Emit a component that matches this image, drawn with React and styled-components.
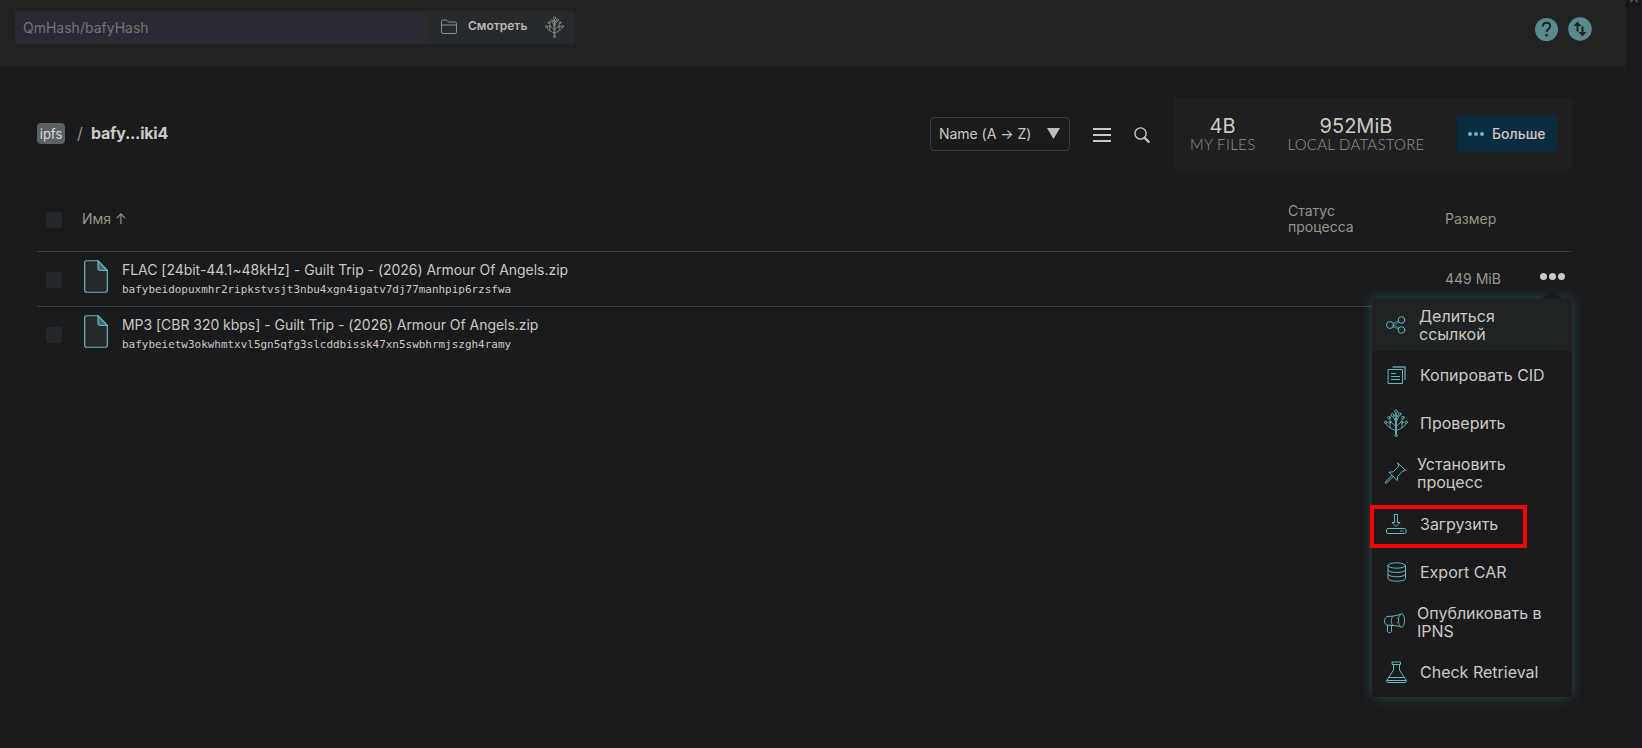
import React from "react";
import styled, { createGlobalStyle } from "styled-components";

const colors = {
  page: "#191b1c",
  bar: "#202223",
  panel: "#1e2021",
  field: "#24282a",
  line: "#3a3d3f",
  text: "#cdc9c2",
  muted: "#9d9488",
  aqua: "#69b5bb",
  teal: "#5b8a8d",
};

const GlobalStyle = createGlobalStyle`
  * {
    box-sizing: border-box;
  }
  body {
    margin: 0;
    background: ${colors.page};
    color: ${colors.text};
    font-family: Inter, "Liberation Sans", sans-serif;
    font-size: 14px;
    overflow: hidden;
  }
`;

const Page = styled.div`
  display: flex;
  height: 748px;
`;
const Content = styled.div`
  flex: 1;
  min-width: 0;
`;
const Scrollbar = styled.div`
  width: 16px;
  background: #17191c;
  display: flex;
  justify-content: center;
`;

const TopBar = styled.header`
  height: 66px;
  padding: 11px 34px 0 15px;
  background: ${colors.bar};
  display: flex;
  align-items: flex-start;
  justify-content: space-between;
`;
const SearchBox = styled.div`
  display: flex;
  width: 560px;
  height: 33px;
  border-radius: 3px;
  overflow: hidden;
  background: #262a2c;
`;
const SearchField = styled.div`
  width: 414px;
  padding-left: 8px;
  line-height: 33px;
  color: #77757a;
  background: #2b2932;
`;
const BrowseButton = styled.div`
  display: flex;
  align-items: center;
  padding: 0 0 1px 12px;
  color: #bab7b1;
`;
const BrowseLabel = styled.span`
  width: 60px;
  margin: 0 17px 3px 10px;
  font-size: 12px;
  font-weight: 600;
`;
const TopIcons = styled.div`
  display: flex;
  gap: 10px;
  padding-top: 6px;
`;

const Main = styled.main`
  padding: 32px 54px 0 37px;
`;
const Toolbar = styled.div`
  display: flex;
  align-items: center;
  height: 71px;
`;
const Crumbs = styled.div`
  flex: 1;
  display: flex;
  align-items: center;
  font-size: 16px;
`;
const Badge = styled.span`
  width: 28px;
  height: 21px;
  border-radius: 4px;
  background: #596164;
  color: #dedbd6;
  font-size: 13px;
  line-height: 22px;
  text-align: center;
`;
const Slash = styled.span`
  width: 7px;
  margin: 0 7px 2px 12px;
  color: ${colors.muted};
`;
const Current = styled.b`
  margin-bottom: 2px;
  font-weight: 700;
  letter-spacing: -0.25px;
`;
const Select = styled.div`
  display: flex;
  align-items: center;
  justify-content: space-between;
  width: 140px;
  height: 34px;
  padding: 0 9px 0 8px;
  border: 1px solid ${colors.line};
  border-radius: 4px;
  white-space: nowrap;
  font-size: 14px;
  letter-spacing: -0.03px;
`;
const Tool = styled.div`
  display: flex;
  justify-content: center;
  margin-left: ${(p) => p.$gap}px;
  padding-top: ${(p) => p.$top || 0}px;
`;
const Stats = styled.div`
  display: flex;
  align-items: center;
  width: 398px;
  height: 71px;
  margin-left: 24px;
  padding: 0 15px 0 16px;
  background: ${colors.panel};
`;
const Stat = styled.div`
  width: ${(p) => p.$width}px;
  margin-right: 32px;
  text-align: center;
  white-space: nowrap;
`;
const StatValue = styled.div`
  padding-top: 1px;
  font-size: 20px;
  line-height: 20px;
`;
const StatLabel = styled.div`
  font-family: Lato, sans-serif;
  font-size: 15px;
  font-weight: 300;
  line-height: 17px;
  letter-spacing: ${(p) => p.$spacing}px;
  color: ${colors.muted};
`;
const MoreButton = styled.div`
  display: flex;
  align-items: center;
  gap: 8px;
  width: 100px;
  height: 37px;
  margin-left: auto;
  padding-left: 11px;
  border-radius: 2px;
  background: #0b2b3f;
  font-size: 14px;
  font-weight: 500;
`;

const Table = styled.div`
  margin-top: 18px;
`;
const Row = styled.div`
  position: relative;
  display: flex;
  align-items: center;
  height: ${(p) => (p.$head ? 64 : 55)}px;
  border-top: ${(p) => (p.$head ? "0" : `1px solid ${colors.line}`)};
  padding-left: 9px;
  color: ${(p) => (p.$head ? colors.muted : colors.text)};
`;
const Checkbox = styled.div`
  width: 16px;
  height: 16px;
  margin-top: ${(p) => p.$offset || 0}px;
  border-radius: 2px;
  background: ${colors.field};
`;
const NameHead = styled.div`
  flex: 1;
  margin: 0 0 2px 20px;
`;
const StatusHead = styled.div`
  width: 157px;
  line-height: 16px;
  font-size: 14px;
`;
const SizeCell = styled.div`
  width: 95px;
  padding-bottom: 2px;
  font-size: 14px;
  color: ${colors.muted};
`;
const Actions = styled.div`
  width: 32px;
  display: flex;
  margin-top: -5px;
`;
const FileText = styled.div`
  flex: 1;
  margin-left: 14px;
  white-space: nowrap;
`;
const FileName = styled.div`
  padding-bottom: 2px;
  font-size: 14px;
  line-height: 18px;
  letter-spacing: -0.035px;
`;
const FileHash = styled.div`
  font-family: "DejaVu Sans Mono", monospace;
  font-size: 10.96px;
  line-height: 17px;
`;
const FileIconBox = styled.div`
  display: flex;
  margin: -5px 0 0 22px;
`;

const Menu = styled.div`
  position: absolute;
  top: 46px;
  right: 0;
  z-index: 1;
  width: 200px;
  height: 399px;
  border-radius: 3px;
  background: ${colors.page};
  box-shadow: 0 0 12px rgba(54, 130, 140, 0.5);
`;
const MenuArrow = styled.div`
  position: absolute;
  top: -9px;
  right: 10px;
  border: 10px solid transparent;
  border-top: 0;
  border-bottom: 9px solid ${colors.page};
`;
const MenuItem = styled.div`
  display: flex;
  align-items: center;
  height: ${(p) => p.$height}px;
  padding-left: ${(p) => (p.$indent === undefined ? 12 : p.$indent)}px;
  background: ${(p) => (p.$active ? "#1f2324" : "transparent")};
`;
const MenuLabel = styled.span`
  margin-left: ${(p) => p.$left || 12}px;
  width: 140px;
  font-size: 16px;
  line-height: 18px;
`;
const Highlight = styled.div`
  position: absolute;
  top: 207px;
  left: -2px;
  width: 157px;
  height: 43px;
  border: 4px solid #ff0000;
`;

const Line = styled.svg.attrs({ fill: "none" })`
  flex: none;
  stroke: ${(p) => p.$color || colors.aqua};
  stroke-width: ${(p) => p.$stroke || 1};
  stroke-linecap: round;
  stroke-linejoin: round;
`;

const TreeIcon = ({ width, height, color }) => (
  <Line width={width} height={height} viewBox="0 0 24 28" $color={color} $stroke={0.9}>
    <path d="M11.500 25V9.500M12.500 25V9.500M12 21.500c-5-1.500-8.500-3.500-10-7M12 21.500c5-1.500 8.500-3.500 10-7M6 18.300v-4M18 18.300v-4M11.500 17C8 15 6.500 12.500 5.800 9.800M12.500 17c3.500-2 5-4.500 5.700-7.200M12 13L9 7.500M12 13l3.200-6.500M12 9.500V4.500" />
    <circle cx="12" cy="2.500" r="1.500" />
    <circle cx="8.400" cy="6" r="1.400" />
    <circle cx="15.700" cy="5" r="1.400" />
    <circle cx="5" cy="8.600" r="1.300" />
    <circle cx="19" cy="8.600" r="1.300" />
    <circle cx="12" cy="7" r="1.300" />
    <circle cx="1.700" cy="13.300" r="1.200" />
    <circle cx="22.300" cy="13.300" r="1.200" />
    <circle cx="5.700" cy="13.300" r="1" />
    <circle cx="18.300" cy="13.300" r="1" />
    <circle cx="12" cy="26.400" r="1.200" />
  </Line>
);
const ShareIcon = () => (
  <Line width="24" height="24" viewBox="0 0 24 24">
    <circle cx="6" cy="12" r="3.500" />
    <circle cx="17.500" cy="7" r="3.300" />
    <circle cx="17.500" cy="17" r="3.300" />
    <path d="M9.300 10.200l5-2.300M9.700 11.600l5-2.300M9.300 13.800l5 2.300M9.700 12.400l5 2.300" strokeWidth="0.700" />
  </Line>
);
const CopyIcon = () => (
  <Line width="24" height="24" viewBox="0 0 24 24">
    <path d="M4.500 6.500h14v14h-14zM7.500 10.500h4M7.500 13.500h8M7.500 16.500h8" />
    <path d="M8.500 4h12.500v13" strokeWidth="1.800" opacity="0.650" strokeLinecap="butt" />
  </Line>
);
const PinIcon = () => (
  <Line width="24" height="24" viewBox="0 0 24 24">
    <path d="M15 2l7.500 7.500-2.500.500-5.300 5.300-.5 4.200L6 11.300l4.200-.5L15.500 5.500zM9 14.300L2.500 21v1h1l6.800-6.500" />
  </Line>
);
const DownloadIcon = () => (
  <Line width="24" height="24" viewBox="0 0 24 24">
    <rect x="2.500" y="16.500" width="19.500" height="5" rx="1.500" />
    <path d="M10.500 2.500h3v8h2.500l-4 4-4-4h2.500zM16.500 19h1M19 19h.5" />
  </Line>
);
const DatabaseIcon = () => (
  <Line width="24" height="24" viewBox="0 0 24 24">
    <ellipse cx="12.800" cy="5.500" rx="8.700" ry="2.700" />
    <path d="M4 5.500v13c0 3.600 17.500 3.600 17.500 0v-13M4 10c0 3.400 17.500 3.400 17.500 0M4 14.300c0 3.400 17.500 3.400 17.500 0" />
  </Line>
);
const MegaphoneIcon = () => (
  <Line width="24" height="24" viewBox="0 0 24 24">
    <path d="M4.500 6.500C9 6.500 14 5.500 18.500 4c4-1 4 14 0 13-4-1.300-9-1.800-14-1.800-4-.5-4-8.200 0-8.700zM4.500 15.200v6.500c0 1.200 4 1.200 4 0v-6.300" />
    <path d="M9.500 6.400c-1.700 2-1.700 7 0 8.800M17.500 4.500c-2.800 2-2.800 10 0 12M14.500 8c1.700 1 1.700 4 0 5" strokeWidth="0.800" />
  </Line>
);
const FlaskIcon = () => (
  <Line width="24" height="24" viewBox="0 0 24 24">
    <path d="M8.500 2h8v2.500h-8zM9.500 4.500v5.500L3 20c-.8 1.500-.3 2.500 1 2.500h17c1.300 0 1.800-1 1-2.500L15.500 10V4.500M5.500 17.500h14M3 20.500h19" />
  </Line>
);
const FileIcon = () => (
  <svg width="24" height="33" viewBox="0 0 24 34" preserveAspectRatio="none" fill="#242a2c" stroke={colors.aqua} strokeWidth="1.200">
    <path d="M2.500.8h11.500l9.300 10v20.400q0 2-2 2H2.700q-2 0-2-2V2.600Q.7.800 2.500.800z" />
    <path d="M14 .8v7.500q0 2.500 2.500 2.500h6.800z" fill="#3f6e73" />
  </svg>
);
const Dots = ({ size, gap, color }) => (
  <svg width={size * 3 + gap * 2} height={size} fill={color}>
    {[0, 1, 2].map((i) => (
      <circle key={i} cx={size / 2 + i * (size + gap)} cy={size / 2} r={size / 2} />
    ))}
  </svg>
);

const files = [
  {
    name: "FLAC [24bit-44.1~48kHz] - Guilt Trip - (2026) Armour Of Angels.zip",
    hash: "bafybeidopuxmhr2ripkstvsjt3nbu4xgn4igatv7dj77manhpip6rzsfwa",
    size: "449 MiB",
  },
  {
    name: "MP3 [CBR 320 kbps] - Guilt Trip - (2026) Armour Of Angels.zip",
    hash: "bafybeietw3okwhmtxvl5gn5qfg3slcddbissk47xn5swbhrmjszgh4ramy",
  },
];

const menuItems = [
  { label: "Делиться ссылкой", icon: <ShareIcon />, height: 53, left: 11, active: true },
  { label: "Копировать CID", icon: <CopyIcon />, height: 48 },
  { label: "Проверить", icon: <TreeIcon width={24} height={28} />, height: 48 },
  { label: "Установить процесс", icon: <PinIcon />, height: 52, left: 10, indent: 11 },
  { label: "Загрузить", icon: <DownloadIcon />, height: 49 },
  { label: "Export CAR", icon: <DatabaseIcon />, height: 48 },
  { label: "Опубликовать в IPNS", icon: <MegaphoneIcon />, height: 52, left: 10, indent: 11 },
  { label: "Check Retrieval", icon: <FlaskIcon />, height: 48 },
];

const ContextMenu = () => (
  <Menu>
    <MenuArrow />
    {menuItems.map((item) => (
      <MenuItem key={item.label} $height={item.height} $active={item.active} $indent={item.indent}>
        {item.icon}
        <MenuLabel $left={item.left}>{item.label}</MenuLabel>
      </MenuItem>
    ))}
    <Highlight />
  </Menu>
);

const Header = () => (
  <TopBar>
    <SearchBox>
      <SearchField>QmHash/bafyHash</SearchField>
      <BrowseButton>
        <Line width="17" height="16" viewBox="0 0 17 16" $color="#8c8d8b">
          <path d="M.5 13V2.500Q.5 1 2 1h3.500l2 2H14q1.500 0 1.500 1.500V13q0 1.500-1.500 1.500H2Q.5 14.500.5 13zM.5 6h15" />
        </Line>
        <BrowseLabel>Смотреть</BrowseLabel>
        <TreeIcon width={19} height={22} color="#9b9b98" />
      </BrowseButton>
    </SearchBox>
    <TopIcons>
      <svg width="24" height="24" viewBox="0 0 24 24">
        <circle cx="12.500" cy="12.500" r="11.500" fill={colors.teal} />
        <path d="M8.800 9.500c0-5 7.400-4.600 7.400-.4 0 2.800-3.600 3-3.600 6" fill="none" stroke={colors.bar} strokeWidth="2" />
        <circle cx="12.600" cy="18.200" r="1.300" fill={colors.bar} />
      </svg>
      <svg width="24" height="24" viewBox="0 0 24 24">
        <circle cx="12" cy="12" r="11.800" fill={colors.teal} />
        <path d="M9.500 4.500l4 4.500h-3v5.500h-2V9h-3zM14.500 19.500l-4-4.500h3V9.500h2V15h3z" fill={colors.bar} />
      </svg>
    </TopIcons>
  </TopBar>
);

const App = () => {
  return (
    <Page>
      <GlobalStyle />
      <Content>
        <Header />
        <Main>
          <Toolbar>
            <Crumbs>
              <Badge>ipfs</Badge>
              <Slash>/</Slash>
              <Current>bafy...iki4</Current>
            </Crumbs>
            <Select>
              Name (A → Z)
              <svg width="13" height="11" fill="#c2bcb2">
                <path d="M0 0h13L6.500 11z" />
              </svg>
            </Select>
            <Tool $gap={23} $top={3}>
              <svg width="18" height="16" fill={colors.text}>
                <path d="M0 1h18v2H0zM0 7h18v2H0zM0 13h18v2H0z" />
              </svg>
            </Tool>
            <Tool $gap={23} $top={3}>
              <Line width="16" height="17" viewBox="0 0 16 17" $color={colors.text} $stroke={1.4}>
                <circle cx="6.500" cy="6.500" r="5.600" />
                <path d="M10.800 11l3.700 3.700" strokeWidth="2.400" />
              </Line>
            </Tool>
            <Stats>
              <Stat $width={65}>
                <StatValue>4B</StatValue>
                <StatLabel $spacing={0.35}>MY FILES</StatLabel>
              </Stat>
              <Stat $width={138}>
                <StatValue>952MiB</StatValue>
                <StatLabel $spacing={0.25}>LOCAL DATASTORE</StatLabel>
              </Stat>
              <MoreButton>
                <Dots size={4} gap={2} color={colors.aqua} />
                Больше
              </MoreButton>
            </Stats>
          </Toolbar>
          <Table>
            <Row $head>
              <Checkbox $offset={1} />
              <NameHead>Имя ↑</NameHead>
              <StatusHead>
                Статус
                <br />
                процесса
              </StatusHead>
              <SizeCell>Размер</SizeCell>
              <Actions />
            </Row>
            {files.map((file, i) => (
              <Row key={file.hash}>
                <Checkbox $offset={2} />
                <FileIconBox>
                  <FileIcon />
                </FileIconBox>
                <FileText>
                  <FileName>{file.name}</FileName>
                  <FileHash>{file.hash}</FileHash>
                </FileText>
                <SizeCell>{file.size}</SizeCell>
                <Actions>{i === 0 && <Dots size={7} gap={2} color={colors.text} />}</Actions>
                {i === 0 && <ContextMenu />}
              </Row>
            ))}
          </Table>
        </Main>
      </Content>
      <Scrollbar>
        <svg width="8" height="3" fill="none" stroke="#62666a" strokeWidth="1.500">
          <path d="M0 2L2.500 0M8 2L5.500 0" />
        </svg>
      </Scrollbar>
    </Page>
  );
};

export default App;
